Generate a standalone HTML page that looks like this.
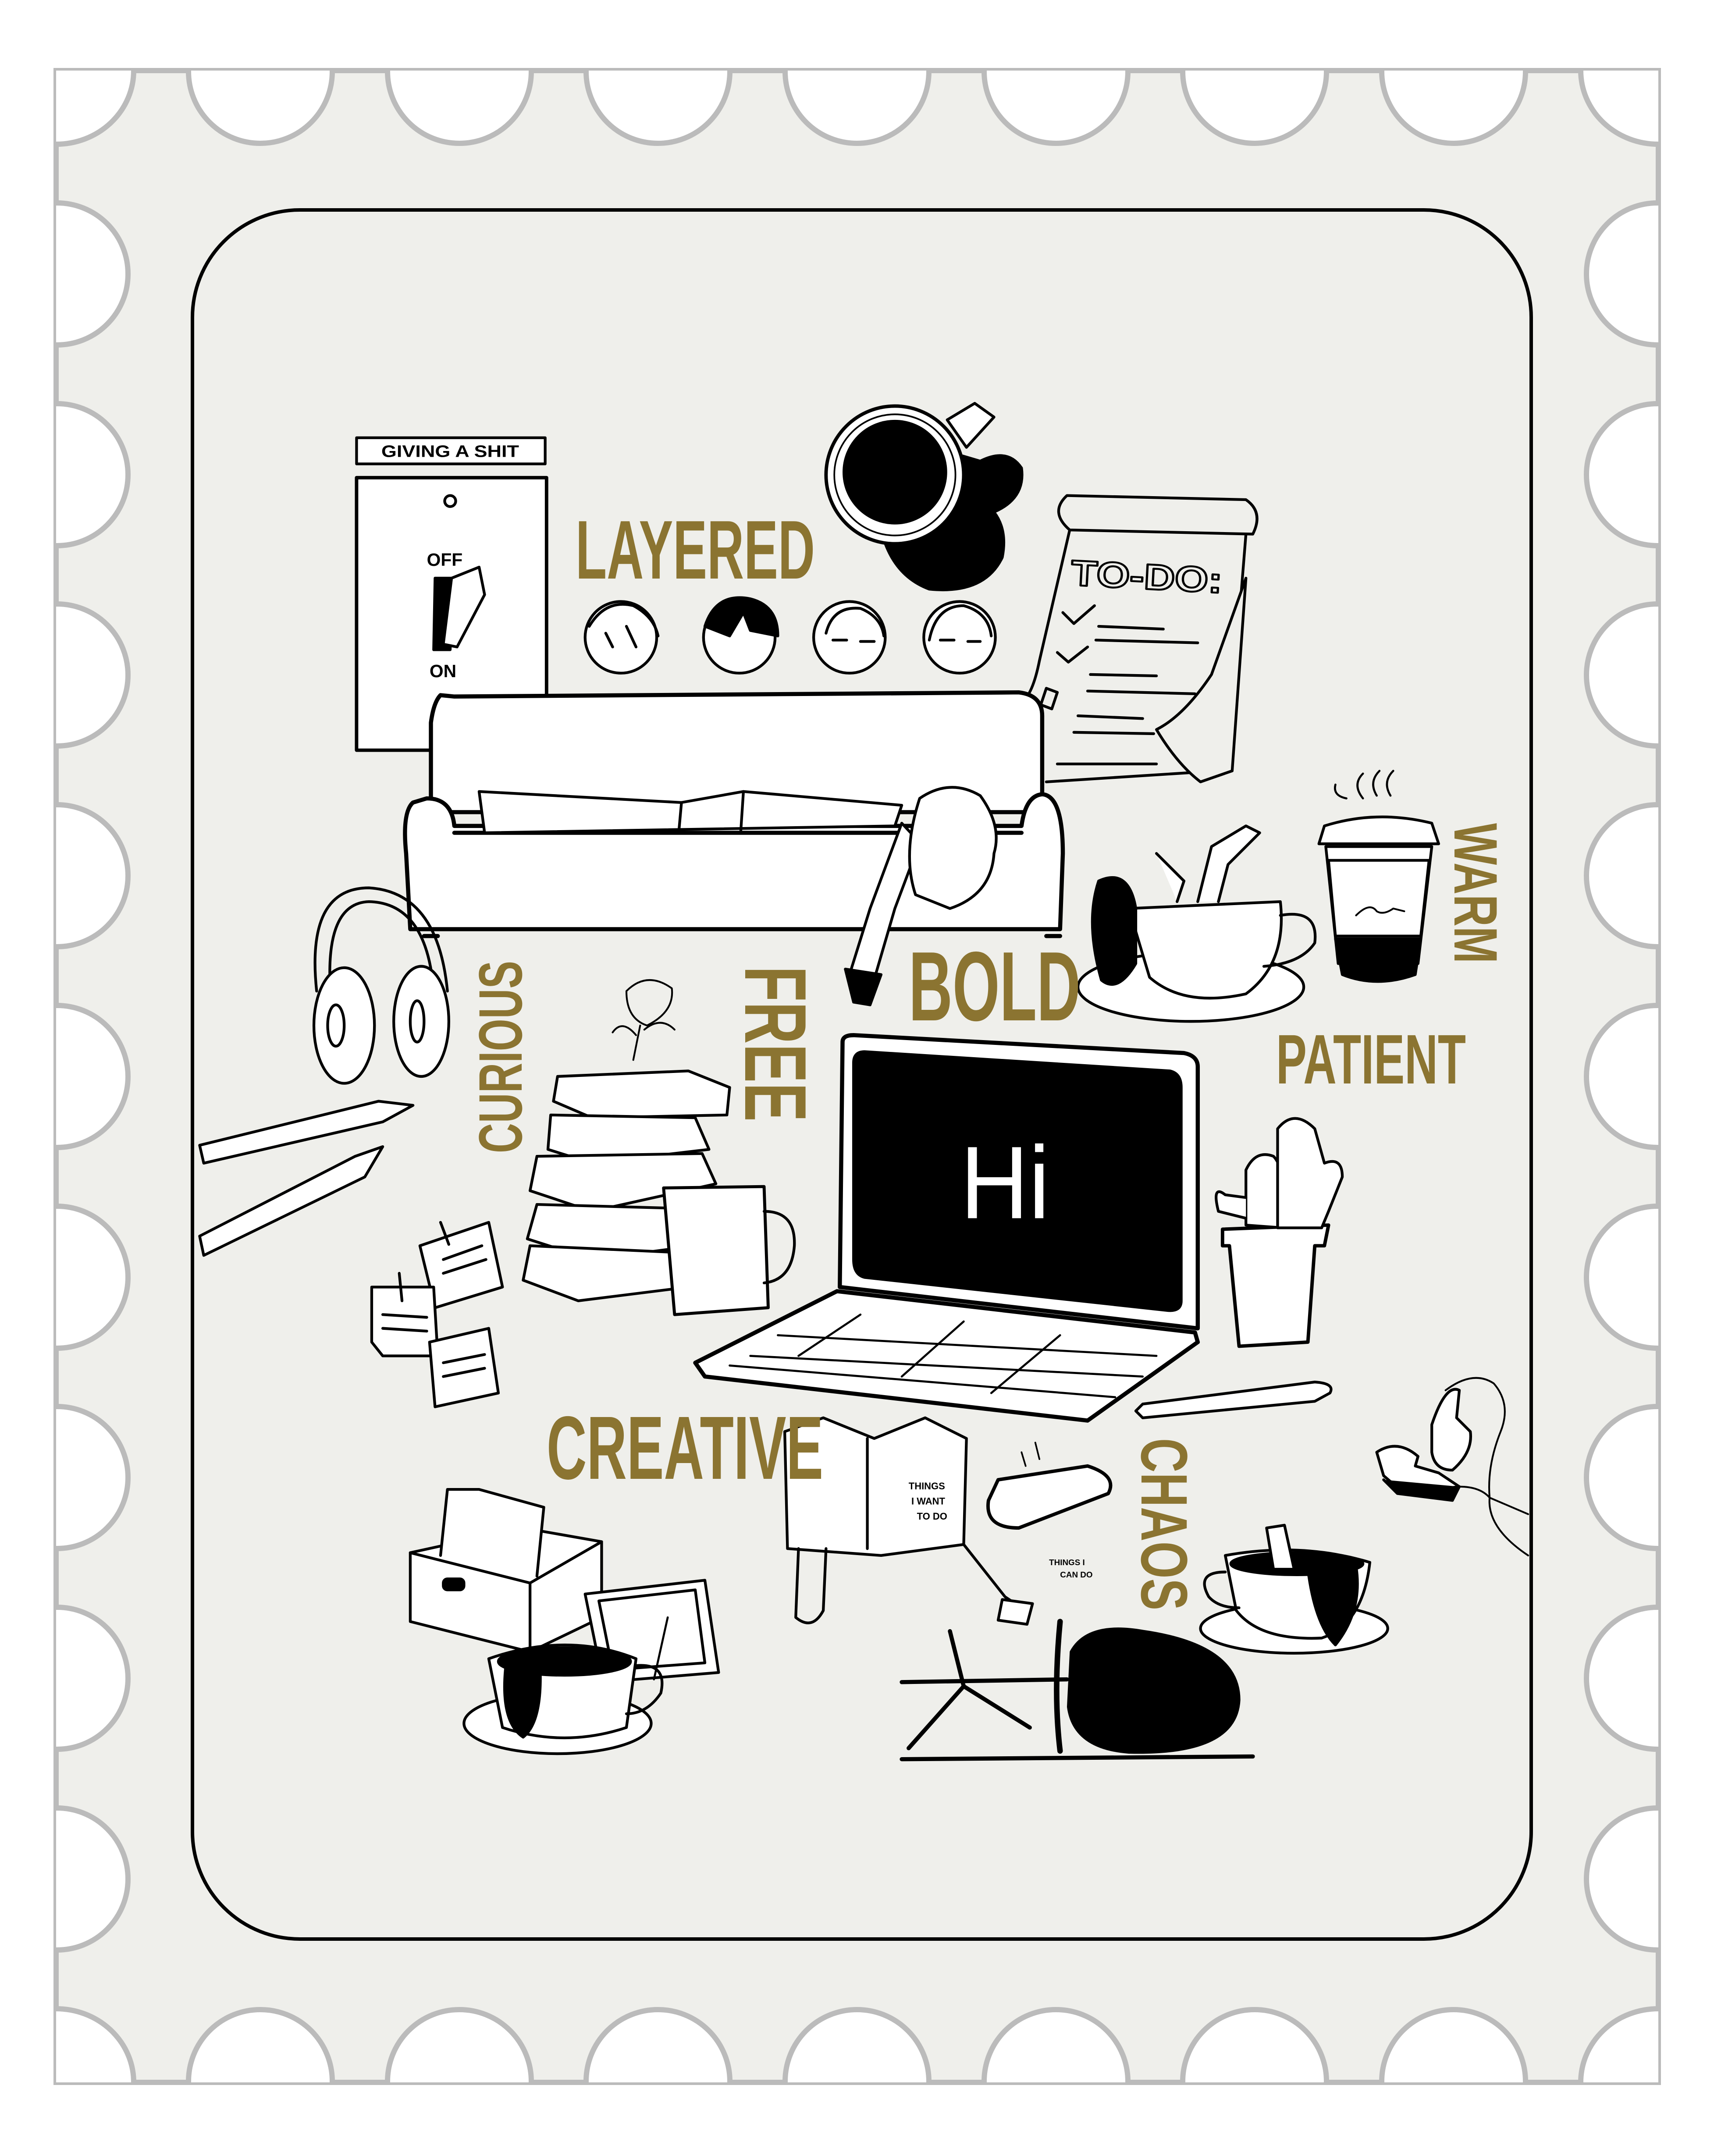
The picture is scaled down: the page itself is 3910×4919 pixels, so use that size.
<!DOCTYPE html>
<html><head><meta charset="utf-8"><style>
html,body{margin:0;padding:0;background:#fff;width:3910px;height:4919px;overflow:hidden}
svg{display:block}
.g{fill:#8b7431;font-family:"Liberation Sans",sans-serif;font-weight:bold}
.h{font-family:"Liberation Sans",sans-serif;font-weight:bold;fill:#000}
</style></head><body>
<svg width="3910" height="4919" viewBox="0 0 3910 4919" xmlns="http://www.w3.org/2000/svg">
<defs><clipPath id="st"><rect x="128" y="161" width="3655" height="4590"/></clipPath></defs>
<rect x="128" y="161" width="3655" height="4590" fill="#efefeb" stroke="#bbb" stroke-width="12"/>
<g clip-path="url(#st)" fill="#fff" stroke="#bbb" stroke-width="12">
<circle cx="594" cy="163" r="164"/><circle cx="1048" cy="163" r="164"/><circle cx="1501" cy="163" r="164"/><circle cx="1955" cy="163" r="164"/><circle cx="2409" cy="163" r="164"/><circle cx="2862" cy="163" r="164"/><circle cx="3316" cy="163" r="164"/>
<circle cx="594" cy="4749" r="164"/><circle cx="1048" cy="4749" r="164"/><circle cx="1501" cy="4749" r="164"/><circle cx="1955" cy="4749" r="164"/><circle cx="2409" cy="4749" r="164"/><circle cx="2862" cy="4749" r="164"/><circle cx="3316" cy="4749" r="164"/>
<circle cx="130" cy="625" r="162"/><circle cx="130" cy="1083" r="162"/><circle cx="130" cy="1540" r="162"/><circle cx="130" cy="1998" r="162"/><circle cx="130" cy="2456" r="162"/><circle cx="130" cy="2914" r="162"/><circle cx="130" cy="3371" r="162"/><circle cx="130" cy="3829" r="162"/><circle cx="130" cy="4287" r="162"/>
<circle cx="3781" cy="625" r="162"/><circle cx="3781" cy="1083" r="162"/><circle cx="3781" cy="1540" r="162"/><circle cx="3781" cy="1998" r="162"/><circle cx="3781" cy="2456" r="162"/><circle cx="3781" cy="2914" r="162"/><circle cx="3781" cy="3371" r="162"/><circle cx="3781" cy="3829" r="162"/><circle cx="3781" cy="4287" r="162"/>
<ellipse cx="128" cy="161" rx="177" ry="168"/><ellipse cx="3783" cy="161" rx="177" ry="168"/><ellipse cx="128" cy="4751" rx="177" ry="168"/><ellipse cx="3783" cy="4751" rx="177" ry="168"/>
</g>
<rect x="439" y="479" width="3054" height="3945" rx="245" fill="#efefeb" stroke="#000" stroke-width="8"/>

<g transform="scale(3.1406)" stroke="#000" stroke-width="2" stroke-linejoin="round" stroke-linecap="round" fill="none">
<!-- switch -->
<rect x="259" y="318" width="137" height="19" fill="#fff"/>
<text x="327" y="332" class="h" font-size="12" text-anchor="middle" stroke="none" textLength="100" lengthAdjust="spacingAndGlyphs">GIVING A SHIT</text>
<rect x="259" y="347" width="138" height="198" fill="#fff" stroke-width="2.5"/>
<ellipse cx="327" cy="364" rx="4" ry="4"/>
<text x="310" y="411" class="h" font-size="13" stroke="none">OFF</text>
<text x="312" y="492" class="h" font-size="13" stroke="none">ON</text>
<path d="M316 420 L329 420 L327 472 L315 472 Z" fill="#000"/>
<path d="M328 420 L348 412 L352 432 L332 470 L322 468 Z" fill="#fff"/>
<!-- mug top -->
<path d="M640 385 Q648 418 675 428 Q715 432 728 405 Q732 385 722 372 Q745 362 742 340 Q732 325 712 335 L695 330 Q690 370 640 385 Z" fill="#000"/>
<path d="M688 305 L708 293 L722 303 L702 325 Z" fill="#fff"/>
<circle cx="650" cy="345" r="50" fill="#fff" stroke-width="2.5"/>
<circle cx="650" cy="345" r="44" fill="#fff" stroke-width="1.2"/>
<circle cx="650" cy="343" r="37" fill="#000"/>
<!-- to-do -->
<path d="M775 360 L905 363 Q918 372 910 388 L777 385 Q762 372 775 360 Z"/>
<path d="M777 385 L755 480 Q750 505 742 510"/>
<path d="M905 388 L900 450 L885 560 L760 568"/>
<text x="778" y="428" font-family="Liberation Sans, sans-serif" font-weight="bold" font-size="26" style="fill:none;stroke:#000;stroke-width:1.4" textLength="110" lengthAdjust="spacingAndGlyphs" transform="rotate(3 835 420)">TO-DO:</text>
<path d="M798 455 L845 457 M796 465 L870 467 M792 490 L840 491 M790 502 L868 504 M783 520 L830 522 M780 532 L838 533 M768 555 L840 555"/>
<path d="M772 445 L780 453 L795 440 M768 474 L776 481 L790 470 M760 500 L768 503 L764 515 L756 512 Z"/>
<path d="M840 530 Q860 520 880 490 L905 420 L895 560 L872 568 Q855 555 840 530 Z" fill="#efefeb"/>
<!-- faces -->
<g fill="#fff" stroke-width="2">
<circle cx="451" cy="463" r="26"/><circle cx="537" cy="463" r="26"/><circle cx="617" cy="463" r="26"/><circle cx="697" cy="463" r="26"/>
</g>
<path d="M428 455 Q440 435 460 440 Q475 448 478 462 M455 455 L462 470 M440 460 L445 470" />
<path d="M512 455 Q520 430 545 435 Q565 440 565 462 L545 458 L540 445 L530 462 Z" fill="#000"/>
<path d="M600 460 Q605 440 625 442 Q640 448 642 462 M605 465 L615 465 M625 466 L635 466"/>
<path d="M675 465 Q680 440 700 440 Q718 445 720 462 M683 465 L693 465 M703 466 L712 466"/>
<!-- sofa -->
<path d="M320 505 Q315 510 313 525 L313 590 L757 590 L757 520 Q757 505 740 503 L330 506 Z" fill="#fff" stroke-width="3"/>
<path d="M300 583 Q292 590 295 620 L298 675 L770 675 L772 620 Q772 578 757 577 Q745 578 742 600 L330 600 Q328 580 310 580 Z" fill="#fff" stroke-width="3"/>
<path d="M330 605 L742 605 M308 680 L318 680 M760 680 L770 680" stroke-width="3"/>
<path d="M348 575 L352 605 L650 600 L655 585 L540 575 L495 583 Z" fill="#fff"/>
<path d="M495 583 L493 605 M540 575 L538 605"/>
<!-- person arm & head -->
<path d="M655 598 L632 660 L618 705 L636 708 L650 660 L668 612 Z" fill="#fff"/>
<path d="M614 704 L620 728 L632 730 L640 708 Z" fill="#000"/>
<path d="M668 580 Q690 565 712 578 Q728 600 722 620 Q720 650 690 660 L665 650 Q655 620 668 580 Z" fill="#fff"/>
<!-- headphones -->
<path d="M230 720 Q222 645 268 645 Q318 648 325 720" stroke-width="2"/>
<path d="M240 720 Q236 656 268 655 Q310 656 315 720"/>
<ellipse cx="250" cy="745" rx="22" ry="42" fill="#fff"/>
<ellipse cx="306" cy="742" rx="20" ry="40" fill="#fff"/>
<ellipse cx="244" cy="745" rx="6" ry="15"/><ellipse cx="303" cy="742" rx="5" ry="15"/>
<!-- pencils -->
<path d="M145 832 L275 800 L300 803 L278 815 L148 845 Z" fill="#fff"/>
<path d="M145 898 L258 840 L278 833 L265 855 L148 912 Z" fill="#fff"/>
<!-- books -->
<path d="M405 782 L500 778 L530 790 L528 810 L430 812 L402 800 Z" fill="#fff"/>
<path d="M400 810 L505 812 L515 835 L430 845 L398 835 Z" fill="#fff"/>
<path d="M390 840 L510 838 L520 860 L430 880 L385 865 Z" fill="#fff"/>
<path d="M390 875 L500 878 L505 905 L430 915 L383 900 Z" fill="#fff"/>
<path d="M385 905 L495 910 L500 935 L420 945 L380 930 Z" fill="#fff"/>
<path d="M460 770 L465 745 M455 720 Q470 705 488 718 Q490 735 470 745 Q455 740 455 720 Z M445 750 Q452 740 462 752 M468 748 Q480 738 490 748" stroke-width="1.3"/>
<!-- white mug -->
<path d="M482 863 L555 862 L558 950 L490 955 Z" fill="#fff" stroke-width="2.2"/>
<path d="M555 880 Q578 880 577 905 Q575 930 555 932"/>
<!-- sticky notes -->
<path d="M305 905 L355 888 L365 935 L316 950 Z" fill="#fff"/>
<path d="M270 935 L315 935 L318 985 L278 985 L270 975 Z" fill="#fff"/>
<path d="M312 975 L355 965 L362 1012 L316 1022 Z" fill="#fff"/>
<path d="M320 888 L326 904 M290 925 L292 945 M322 915 L350 905 M322 925 L353 915 M278 955 L310 957 M278 965 L310 967 M322 990 L352 984 M322 1000 L352 994"/>
<!-- laptop -->
<path d="M612 757 Q612 752 620 752 L860 765 Q870 767 870 775 L870 965 L610 935 Z" fill="#fff" stroke-width="3"/>
<path d="M620 772 Q620 764 628 764 L850 778 Q858 780 858 790 L858 945 Q858 953 848 952 L628 928 Q620 926 620 915 Z" fill="#000"/>
<path d="M608 938 L505 990 L512 1000 L790 1032 L870 975 L868 968 Z" fill="#fff" stroke-width="3"/>
<path d="M565 970 L840 985 M545 985 L830 1000 M530 992 L810 1015 M625 955 L580 985 M700 960 L655 1000 M770 970 L720 1012" stroke-width="1.5"/>
<text x="730" y="885" text-anchor="middle" fill="#fff" stroke="none" font-family="Liberation Sans, sans-serif" font-size="75" textLength="65" lengthAdjust="spacingAndGlyphs">Hi</text>
<!-- coffee cup with person -->
<ellipse cx="865" cy="717" rx="82" ry="25" fill="#fff"/>
<path d="M820 660 L930 655 Q935 700 905 722 Q860 732 835 710 Z" fill="#fff"/>
<path d="M930 665 Q958 660 955 685 Q945 700 918 702"/>
<path d="M825 660 Q820 630 798 640 Q788 670 800 712 Q812 722 825 700 Z" fill="#000"/>
<path d="M870 655 L880 615 L905 600 L915 605 L892 628 L885 655" fill="#fff"/>
<path d="M840 620 L860 640 L855 655" fill="#fff"/>
<!-- takeaway cup -->
<path d="M962 600 Q1000 588 1040 598 L1045 613 L958 613 Z" fill="#fff"/>
<path d="M963 615 L1040 615 L1030 700 L972 700 Z" fill="#fff"/>
<path d="M965 625 L1038 625 L1032 680 L970 680 Z" fill="#fff"/>
<path d="M970 682 L1032 682 L1028 708 Q1000 718 975 708 Z" fill="#000"/>
<path d="M985 665 Q995 655 1000 662 Q1005 665 1012 660 L1020 662" stroke-width="1.3"/>
<path d="M990 580 Q982 570 990 562 M1000 578 Q994 568 1002 560 M1010 578 Q1004 568 1012 560 M970 570 Q968 578 978 580" stroke-width="1.5"/>
<!-- cactus -->
<path d="M888 893 L965 890 L962 905 L955 905 L950 975 L900 978 L893 905 L888 905 Z" fill="#fff" stroke-width="2.5"/>
<path d="M905 890 L905 850 Q912 835 925 840 Q935 850 932 892 Z" fill="#fff"/>
<path d="M928 892 L928 820 Q940 805 955 820 L962 845 Q975 840 975 855 L965 880 L960 892 Z" fill="#fff"/>
<path d="M905 870 L890 868 Q880 860 885 880 L905 885" fill="#fff"/>
<!-- pen -->
<path d="M830 1020 L955 1004 Q970 1005 966 1012 L955 1018 L830 1030 L825 1025 Z" fill="#fff"/>
<!-- headset -->
<path d="M1040 1035 Q1050 1005 1060 1010 L1058 1030 L1068 1040 Q1070 1055 1055 1068 Q1042 1068 1040 1055 Z" fill="#fff"/>
<path d="M1000 1055 Q1015 1045 1030 1058 L1028 1065 L1045 1070 L1060 1080 L1020 1085 L1005 1072 Z" fill="#fff"/>
<path d="M1005 1075 L1015 1085 L1055 1090 L1060 1080" fill="#000"/>
<path d="M1060 1080 Q1075 1080 1082 1088 L1110 1100 M1082 1088 Q1080 1110 1110 1130 M1050 1010 Q1070 995 1085 1005 Q1098 1020 1090 1040 Q1080 1065 1082 1088" stroke-width="1.3"/>
<!-- reading person/book -->
<path d="M570 1040 L598 1030 L635 1045 L672 1030 L702 1045 L700 1122 L640 1130 L572 1125 Z" fill="#fff"/>
<path d="M630 1045 L630 1125"/>
<text x="660" y="1082" class="h" font-size="7" stroke="none">THINGS</text>
<text x="662" y="1093" class="h" font-size="7" stroke="none">I WANT</text>
<text x="666" y="1104" class="h" font-size="7" stroke="none">TO DO</text>
<path d="M580 1125 L578 1175 Q590 1185 598 1170 L600 1125 M700 1122 L730 1160 L745 1170"/>
<path d="M728 1162 L750 1165 L746 1180 L725 1177 Z" fill="#fff"/>
<text x="762" y="1137" class="h" font-size="6" stroke="none">THINGS I</text>
<text x="770" y="1146" class="h" font-size="6" stroke="none">CAN DO</text>
<!-- phone -->
<path d="M725 1075 L790 1065 Q812 1072 805 1085 L740 1110 Q715 1110 718 1090 Z" fill="#fff" stroke-width="2.5"/>
<path d="M745 1065 L742 1055 M755 1060 L752 1048" stroke-width="1.2"/>
<!-- file box -->
<path d="M298 1128 L380 1110 L437 1120 L437 1175 L385 1200 L298 1178 Z" fill="#fff"/>
<path d="M298 1128 L385 1150 L437 1120 M385 1150 L385 1200"/>
<path d="M320 1130 L325 1082 L348 1082 L395 1095 L390 1145" fill="#fff"/>
<rect x="322" y="1147" width="15" height="8" rx="3" fill="#000"/>
<!-- tablet -->
<path d="M425 1158 L512 1148 L522 1215 L438 1222 Z" fill="#fff"/>
<path d="M435 1163 L505 1155 L512 1208 L445 1213 Z"/>
<!-- bottom-left cup -->
<ellipse cx="405" cy="1252" rx="68" ry="22" fill="#fff"/>
<path d="M355 1205 Q412 1185 462 1205 L455 1255 Q410 1270 365 1255 Z" fill="#fff"/>
<path d="M462 1210 Q485 1208 480 1230 Q470 1245 455 1245"/>
<ellipse cx="410" cy="1207" rx="48" ry="10" fill="#000"/>
<path d="M368 1205 Q362 1250 380 1262 Q395 1250 392 1205 Z" fill="#000"/>
<path d="M485 1175 L475 1220" stroke-width="1.5"/>
<!-- chair -->
<path d="M778 1200 Q790 1178 830 1185 Q900 1195 900 1235 Q898 1275 820 1273 Q780 1270 776 1240 Z" fill="#000"/>
<path d="M770 1178 Q765 1230 770 1272" stroke-width="4"/>
<path d="M655 1222 L775 1220 M690 1185 L700 1225 L660 1270 M700 1225 L748 1255 M655 1278 L910 1276" stroke-width="3"/>
<!-- right bottom cup -->
<ellipse cx="940" cy="1183" rx="68" ry="18" fill="#fff"/>
<path d="M890 1130 Q945 1120 995 1135 Q990 1180 960 1190 Q915 1192 898 1170 Z" fill="#fff"/>
<path d="M890 1142 Q868 1142 878 1160 Q885 1168 900 1168"/>
<ellipse cx="942" cy="1136" rx="48" ry="8" fill="#000"/>
<path d="M950 1140 Q960 1130 985 1138 Q990 1170 970 1195 Q955 1180 950 1140 Z" fill="#000"/>
<path d="M920 1110 L925 1140 L940 1140 L933 1108 Z" fill="#fff"/>
</g>

<g class="g">
<text x="1313" y="1320" font-size="190" textLength="546" lengthAdjust="spacingAndGlyphs">LAYERED</text>
<text x="2073" y="2328" font-size="225" textLength="392" lengthAdjust="spacingAndGlyphs">BOLD</text>
<text x="2911" y="2472" font-size="160" textLength="433" lengthAdjust="spacingAndGlyphs">PATIENT</text>
<text x="1247" y="3374" font-size="205" textLength="631" lengthAdjust="spacingAndGlyphs">CREATIVE</text>
<text transform="translate(3318 1878) rotate(90)" font-size="140" textLength="320" lengthAdjust="spacingAndGlyphs">WARM</text>
<text transform="translate(1700 2204) rotate(90)" font-size="200" textLength="355" lengthAdjust="spacingAndGlyphs">FREE</text>
<text transform="translate(2604 3281) rotate(90)" font-size="150" textLength="393" lengthAdjust="spacingAndGlyphs">CHAOS</text>
<text transform="translate(1190 2631) rotate(-90)" font-size="140" textLength="439" lengthAdjust="spacingAndGlyphs">CURIOUS</text>
</g>
</svg>
</body></html>
